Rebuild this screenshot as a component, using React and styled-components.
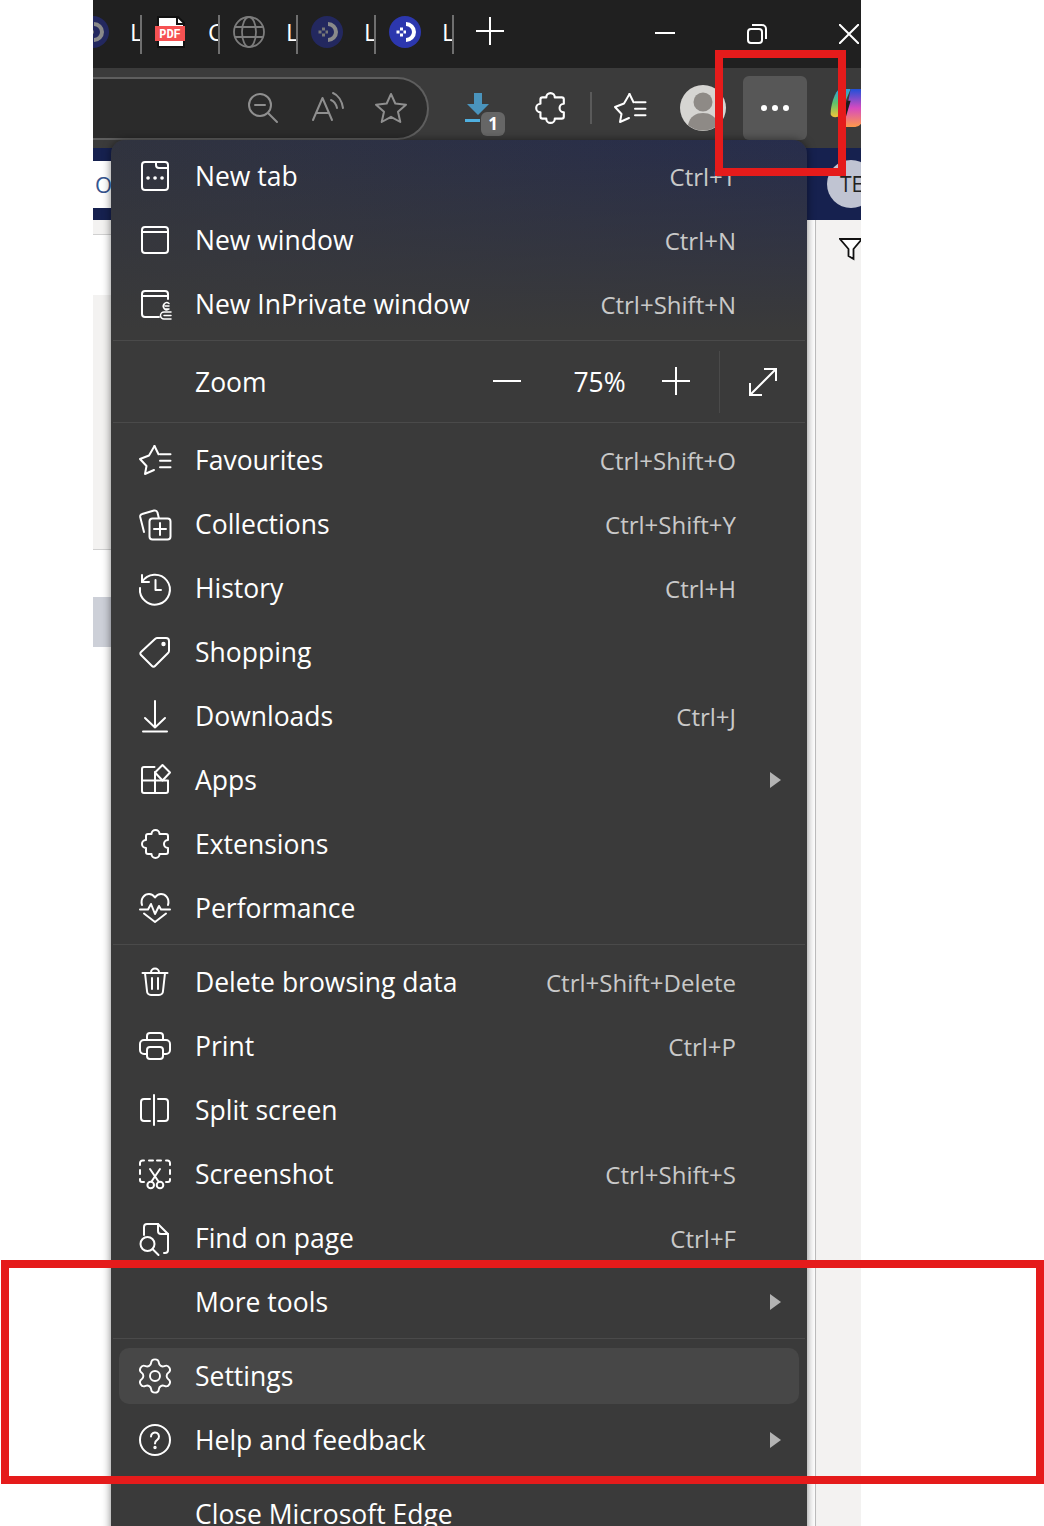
import React from "react";
import styled, { createGlobalStyle } from "styled-components";
import { Settings } from "lucide-react";

const GlobalStyle = createGlobalStyle`
  html, body {
    margin: 0;
    padding: 0;
    background: #fff;
  }
  body {
    font-family: "Open Sans", "Noto Sans", sans-serif;
  }
`;

const Stroke = ({ size = 32, color = "currentColor", width = 2, children }) => (
  <svg
    width={size}
    height={size}
    viewBox="0 0 32 32"
    fill="none"
    stroke={color}
    strokeWidth={width}
    strokeLinecap="round"
    strokeLinejoin="round"
    overflow="visible"
  >
    {children}
  </svg>
);

const puzzle =
  "M12.5 6a4 4 0 0 1 8 0H27a2 2 0 0 1 2 2v4a4 4 0 0 0 0 8v4a2 2 0 0 1-2 2h-6.5a4 4 0 0 1-8 0H9a2 2 0 0 1-2-2v-4a4 4 0 0 1 0-8V8a2 2 0 0 1 2-2z";

const starList = (
  <>
    <path d="M15.5 2L10 11.5 1 15l6.5 7L6 30l9-4" />
    <path d="M15.5 2l4 8.3M21 10.3h10.5M21 16.7h10.5M21 23.3h10.5" />
  </>
);

const icons = {
  newTab: (
    <Stroke>
      <path d="M6 2h20a3 3 0 0 1 3 3v22a3 3 0 0 1-3 3H6a3 3 0 0 1-3-3V5a3 3 0 0 1 3-3z" />
      <path d="M17 2v3a3 3 0 0 0 3 3h9" />
      <path d="M9 18h.1M16 18h.1M23 18h.1" strokeWidth="3.6" />
    </Stroke>
  ),
  newWindow: (
    <Stroke>
      <path d="M6 3h20a3 3 0 0 1 3 3v20a3 3 0 0 1-3 3H6a3 3 0 0 1-3-3V6a3 3 0 0 1 3-3z" />
      <path d="M3 8h26" />
    </Stroke>
  ),
  inPrivate: (
    <Stroke>
      <path d="M20 29H6a3 3 0 0 1-3-3V6a3 3 0 0 1 3-3h20a3 3 0 0 1 3 3v5" />
      <path d="M3 8h26" />
      <path d="M30 15.5a3.5 3.5 0 1 0 0 5.5h-4M26 18h4" strokeWidth="1.5" />
      <path d="M32 24h-7a3.2 3.2 0 0 0 0 7h7M25 27.5h7" strokeWidth="1.5" />
    </Stroke>
  ),
  favourites: <Stroke>{starList}</Stroke>,
  collections: (
    <Stroke>
      <path d="M5 24L1.2 9a2.5 2.5 0 0 1 2-3L15 2.5a3 3 0 0 1 3.5 2l1.3 5.5" />
      <rect x="10.5" y="10.5" width="21" height="21" rx="3" />
      <path d="M21 15v12M15 21h12" />
    </Stroke>
  ),
  history: (
    <Stroke>
      <path d="M3 10a15 15 0 1 1-2 6" />
      <path d="M3 3v7h7" />
      <path d="M16.5 8v10H22" />
    </Stroke>
  ),
  shopping: (
    <Stroke>
      <path d="M27 2h-9a3 3 0 0 0-2 1L2 16a2 2 0 0 0 0 3l11 11a2 2 0 0 0 3 0l13-13a3 3 0 0 0 1-2V5a3 3 0 0 0-3-3z" />
      <circle cx="24.5" cy="8" r="1.2" fill="currentColor" />
    </Stroke>
  ),
  downloads: (
    <Stroke>
      <path d="M16 1v26.5M6 18l10 9.5L26 18M4 31.5h24" />
    </Stroke>
  ),
  apps: (
    <Stroke>
      <path d="M15.5 3H5a2 2 0 0 0-2 2v22a2 2 0 0 0 2 2h22a2 2 0 0 0 2-2V16.5H3" />
      <path d="M16 8v21" />
      <path d="M23.5 1l7.5 7.5-7.5 8-7.5-8z" />
    </Stroke>
  ),
  extensions: (
    <Stroke>
      <path d={puzzle} />
    </Stroke>
  ),
  performance: (
    <Stroke>
      <path d="M1 17.5h8l3-5.5 4 10 4-8 2 3.5h9" />
      <path d="M3 13C1 6 6 2 10 2c3 0 5 2 6 3.5C17 4 19 2 22 2c4 0 9 4 7 11" />
      <path d="M5 21.5L16 30l11-8.5" />
    </Stroke>
  ),
  trash: (
    <Stroke>
      <path d="M3.5 7h25M12 6.5a4 4 0 0 1 8 0" />
      <path d="M6 7l2 18a4 4 0 0 0 4 4h8a4 4 0 0 0 4-4l2-18" />
      <path d="M13 12v11M19 12v11" />
    </Stroke>
  ),
  print: (
    <Stroke>
      <path d="M8 10V6a3 3 0 0 1 3-3h10a3 3 0 0 1 3 3v4" />
      <path d="M8 24H5a4 4 0 0 1-4-4v-6a4 4 0 0 1 4-4h22a4 4 0 0 1 4 4v6a4 4 0 0 1-4 4h-3" />
      <rect x="8" y="17" width="16" height="12" rx="3" />
    </Stroke>
  ),
  split: (
    <Stroke>
      <path d="M11 5H5a3 3 0 0 0-3 3v16a3 3 0 0 0 3 3h6" />
      <path d="M15 1v30" />
      <path d="M19 5h7a3 3 0 0 1 3 3v16a3 3 0 0 1-3 3h-7" />
    </Stroke>
  ),
  screenshot: (
    <Stroke>
      <path d="M1 7V5a2.5 2.5 0 0 1 2.5-2.5H5M10 2.5h4M18 2.5h4M27 2.5h1.5A2.5 2.5 0 0 1 31 5v2M1 12v4M31 12v4M1 21v1a2 2 0 0 0 2 2h2M31 21v1a2 2 0 0 1-2 2h-2" />
      <path d="M11 11l8.5 12.5M21 11l-8.5 12.5" />
      <circle cx="11.7" cy="27" r="3.3" />
      <circle cx="21" cy="27" r="3.3" />
    </Stroke>
  ),
  find: (
    <Stroke>
      <path d="M5 13V5a3 3 0 0 1 3-3h11l10 10v16a3 3 0 0 1-3 3h-1" />
      <path d="M19 2v7a3 3 0 0 0 3 3h7" />
      <circle cx="8.5" cy="22" r="7" />
      <path d="M13.5 27l6 6" />
    </Stroke>
  ),
  help: (
    <Stroke>
      <circle cx="16" cy="16" r="15" />
      <path d="M12 12.5a4 4 0 1 1 6.2 3.3c-1.5 1-2.2 2-2.2 3.7" />
      <circle cx="16" cy="23.5" r=".7" fill="currentColor" />
    </Stroke>
  ),
};

const groups = [
  {
    first: true,
    rows: [
      { icon: "newTab", label: "New tab", keys: "Ctrl+T" },
      { icon: "newWindow", label: "New window", keys: "Ctrl+N" },
      { icon: "inPrivate", label: "New InPrivate window", keys: "Ctrl+Shift+N" },
    ],
  },
  { zoom: true },
  {
    rows: [
      { icon: "favourites", label: "Favourites", keys: "Ctrl+Shift+O" },
      { icon: "collections", label: "Collections", keys: "Ctrl+Shift+Y" },
      { icon: "history", label: "History", keys: "Ctrl+H" },
      { icon: "shopping", label: "Shopping" },
      { icon: "downloads", label: "Downloads", keys: "Ctrl+J" },
      { icon: "apps", label: "Apps", more: true },
      { icon: "extensions", label: "Extensions" },
      { icon: "performance", label: "Performance" },
    ],
  },
  {
    rows: [
      { icon: "trash", label: "Delete browsing data", keys: "Ctrl+Shift+Delete" },
      { icon: "print", label: "Print", keys: "Ctrl+P" },
      { icon: "split", label: "Split screen" },
      { icon: "screenshot", label: "Screenshot", keys: "Ctrl+Shift+S" },
      { icon: "find", label: "Find on page", keys: "Ctrl+F" },
      { label: "More tools", more: true },
    ],
  },
  {
    rows: [
      { icon: "settings", label: "Settings", active: true },
      { icon: "help", label: "Help and feedback", more: true },
    ],
  },
  { rows: [{ label: "Close Microsoft Edge" }] },
];

const tabs = [
  { icon: "dim", text: "L" },
  { icon: "pdf", text: "C" },
  { icon: "globe", text: "L" },
  { icon: "dim", text: "L" },
  { icon: "bright", text: "L" },
];

const TabIcon = ({ kind }) => {
  if (kind === "pdf") {
    return (
      <svg width="32" height="32" viewBox="0 0 32 32">
        <path d="M3 1h20l6 6v24H3z" fill="#fff" stroke="#111" strokeWidth="2" />
        <path d="M22 1v7h7" fill="none" stroke="#111" strokeWidth="2" />
        <rect x="0" y="10" width="30" height="15" fill="#f65152" />
        <PdfLabel x="15" y="21.5" textAnchor="middle">
          PDF
        </PdfLabel>
      </svg>
    );
  }
  if (kind === "globe") {
    return (
      <svg width="32" height="32" viewBox="0 0 32 32" fill="none" stroke="#7c7c7c" strokeWidth="1.8">
        <circle cx="16" cy="16" r="15" />
        <ellipse cx="16" cy="16" rx="7" ry="15" />
        <path d="M2 11h28M2 21h28" />
      </svg>
    );
  }
  const bright = kind === "bright";
  return (
    <svg width="32" height="32" viewBox="0 0 32 32">
      <circle cx="16" cy="16" r="16" fill={bright ? "#2c37ae" : "#23285f"} />
      <path
        d="M17 6a10 10 0 0 1 0 20v-4a6 6 0 0 0 0-12z"
        fill={bright ? "#fff" : "#8a8a8a"}
      />
      <path
        d="M11 11.5h3v3h-3zM7.5 14.5h3v3h-3zM11 17.5h3v3h-3zM14.5 14.5H17v3h-2.5z"
        fill={bright ? "#fff" : "#777"}
      />
    </svg>
  );
};

const App = () => {
  return (
    <Page>
      <GlobalStyle />
      <Browser>
        <TabStrip>
          {tabs.map((tab, i) => (
            <Tab key={i}>
              <TabIcon kind={tab.icon} />
              <TabTitle>{tab.text}</TabTitle>
            </Tab>
          ))}
          <AddTab>
            <svg width="28" height="28" viewBox="0 0 28 28" stroke="#fff" strokeWidth="2">
              <path d="M0 14h28M14 0v28" />
            </svg>
          </AddTab>
          <WindowControls>
            <WindowButton>
              <svg width="20" height="20" viewBox="0 0 20 20" stroke="#fff" strokeWidth="2">
                <path d="M0 9h20" />
              </svg>
            </WindowButton>
            <WindowButton>
              <svg width="20" height="20" viewBox="0 0 20 20" fill="none" stroke="#fff" strokeWidth="2">
                <rect x="1" y="5" width="14" height="14" rx="3" />
                <path d="M5 1h10a4 4 0 0 1 4 4v10" />
              </svg>
            </WindowButton>
            <WindowButton>
              <svg width="20" height="20" viewBox="0 0 20 20" stroke="#fff" strokeWidth="2">
                <path d="M0 0l20 20M20 0L0 20" />
              </svg>
            </WindowButton>
          </WindowControls>
        </TabStrip>

        <Toolbar>
          <AddressBar>
            <Stroke color="#8f8f8f">
              <circle cx="13" cy="13" r="11" />
              <path d="M8 13h10M21 21l9 9" />
            </Stroke>
            <Stroke color="#8f8f8f">
              <path d="M2 28L11.5 6 21 28M5.5 21h12" />
              <path d="M20 8c3 1 5 4 6 8M22 1c5 2 9 8 10 15" />
            </Stroke>
            <Stroke color="#8f8f8f">
              <path d="M16 2l4.3 9.5 10.7 1.2-8 7 2.3 10.3L16 24.8 6.700 30 9 19.700l-8-7 10.700-1.200z" />
            </Stroke>
          </AddressBar>

          <DownloadButton>
            <svg width="26" height="32" viewBox="0 0 26 32">
              <path d="M9 0h8v11h7L13 22 2 11h7z" fill="#4a94bd" />
              <rect x="0" y="26" width="15" height="3" fill="#4fb0e0" />
            </svg>
            <DownloadBadge>1</DownloadBadge>
          </DownloadButton>

          <ToolIcon $gap={28}>
            <Stroke size="34" color="#fff">
              <path d={puzzle} />
            </Stroke>
          </ToolIcon>
          <ToolDivider />
          <ToolIcon $gap={29}>
            <Stroke color="#fff">{starList}</Stroke>
          </ToolIcon>

          <Avatar>
            <svg width="46" height="46" viewBox="0 0 46 46">
              <circle cx="23" cy="23" r="23" fill="#d6d5d2" />
              <circle cx="23" cy="17" r="9.5" fill="#8e8a86" />
              <path d="M8 40c2-9 8-12 15-12s13 3 15 12a23 23 0 0 1-30 0z" fill="#8e8a86" />
            </svg>
          </Avatar>

          <MoreButton>
            <MoreDot />
            <MoreDot />
            <MoreDot />
          </MoreButton>

          <Copilot>
            <svg width="36" height="40" viewBox="0 0 36 44">
              <defs>
                <linearGradient id="copilotLeft" x1="0" y1="0" x2="0" y2="1">
                  <stop offset="0" stopColor="#2f9fe0" />
                  <stop offset=".5" stopColor="#5fc26a" />
                  <stop offset="1" stopColor="#f2c63a" />
                </linearGradient>
                <linearGradient id="copilotRight" x1="0" y1="0" x2="0" y2="1">
                  <stop offset="0" stopColor="#1f50d8" />
                  <stop offset=".5" stopColor="#d64ac0" />
                  <stop offset="1" stopColor="#ff9a4a" />
                </linearGradient>
              </defs>
              <path d="M10 1h12L10 30c-2 3-9 3-10-1C0 18 5 3 10 1z" fill="url(#copilotLeft)" />
              <path d="M22 1h14v30c0 6-3 11-9 12H14z" fill="url(#copilotRight)" />
              <path d="M18 14L12 30l-1 4 6-3 5-17z" fill="#1c1c1c" />
            </svg>
          </Copilot>
        </Toolbar>

        <PageBanner>
          <BannerStrip>O</BannerStrip>
          <UserBadge>TE</UserBadge>
        </PageBanner>

        <PageBody>
          <ContentList>
            <ListRow $height={14} $bg="#f3f2f1" $border />
            <ListRow $height={60} />
            <ListRow $height={254} $bg="#f3f2f1" $border />
            <ListRow $height={47} />
            <ListRow $height={50} $bg="#cdd0d8" />
          </ContentList>
          <FilterRail>
            <svg width="24" height="24" viewBox="0 0 24 24" fill="#fff" stroke="#111" strokeWidth="1.8">
              <path d="M1 2h22l-8.500 10v10l-5-3v-7z" />
            </svg>
          </FilterRail>
        </PageBody>
      </Browser>

      <Menu>
        {groups.map((group, i) => (
          <MenuGroup key={i} $first={group.first} $flush={group.zoom}>
            {group.zoom ? (
              <ZoomRow>
                <MenuLabel>Zoom</MenuLabel>
                <ZoomControls>
                  <svg width="28" height="28" viewBox="0 0 28 28" stroke="#fff" strokeWidth="2">
                    <path d="M0 13h28" />
                  </svg>
                  <ZoomValue>75%</ZoomValue>
                  <svg width="28" height="28" viewBox="0 0 28 28" stroke="#fff" strokeWidth="2" overflow="visible">
                    <path d="M0 13h28M14 -1v28" />
                  </svg>
                  <ZoomSeparator />
                  <svg width="30" height="30" viewBox="0 0 30 30" fill="none" stroke="#fff" strokeWidth="2">
                    <path d="M2 28L28 2M16 2h12v12M2 16v12h12" />
                  </svg>
                </ZoomControls>
              </ZoomRow>
            ) : (
              group.rows.map((row) => (
                <MenuRow key={row.label} $active={row.active}>
                  <RowIcon>
                    {row.icon === "settings" ? (
                      <Settings size={40} strokeWidth={1.15} />
                    ) : (
                      icons[row.icon]
                    )}
                  </RowIcon>
                  <MenuLabel>{row.label}</MenuLabel>
                  {row.keys && <Shortcut>{row.keys}</Shortcut>}
                  {row.more && <SubArrow />}
                </MenuRow>
              ))
            )}
          </MenuGroup>
        ))}
      </Menu>

      <Callout $x={715} $y={50} $w={131} $h={126} />
      <Callout $x={1} $y={1260} $w={1043} $h={224} />
    </Page>
  );
};

export default App;

const Page = styled.div`
  position: relative;
  width: 1044px;
  height: 1526px;
  overflow: hidden;
  background: #fff;
`;

const Browser = styled.div`
  width: 768px;
  height: 1526px;
  margin-left: 93px;
  overflow: hidden;
  display: flex;
  flex-direction: column;
`;

const TabStrip = styled.div`
  height: 68px;
  flex: none;
  display: flex;
  background: #202020;
  padding-top: 15px;
  box-sizing: border-box;
  margin-left: -29px;
`;

const Tab = styled.div`
  width: 78px;
  height: 39px;
  flex: none;
  box-sizing: border-box;
  padding: 1px 0 0 13px;
  border-right: 2px solid #6f6f6f;
  display: flex;
  align-items: flex-start;
  overflow: hidden;
  svg {
    flex: none;
  }
`;

const TabTitle = styled.span`
  margin-left: 21px;
  color: #fff;
  font-size: 24px;
  line-height: 32px;
`;

const PdfLabel = styled.text`
  fill: #fff;
  font-family: "Liberation Mono", monospace;
  font-size: 12px;
  font-weight: 700;
`;

const AddTab = styled.div`
  margin: 2px 0 0 22px;
  height: 32px;
  flex: none;
`;

const WindowControls = styled.div`
  margin-left: auto;
  margin-right: -34px;
  display: flex;
  flex: none;
`;

const WindowButton = styled.div`
  width: 92px;
  height: 38px;
  display: flex;
  align-items: center;
  justify-content: center;
`;

const Toolbar = styled.div`
  height: 80px;
  flex: none;
  display: flex;
  align-items: center;
  position: relative;
  background: #3b3b3b;
`;

const AddressBar = styled.div`
  width: 337px;
  height: 63px;
  flex: none;
  box-sizing: border-box;
  margin-left: -1px;
  padding-right: 20px;
  display: flex;
  align-items: center;
  justify-content: flex-end;
  gap: 32px;
  background: #2b2b2b;
  border: 2px solid #5e5e5e;
  border-left: none;
  border-radius: 0 32px 32px 0;
`;

const DownloadButton = styled.div`
  position: relative;
  margin-left: 36px;
  width: 40px;
  height: 44px;
  flex: none;
  padding-top: 7px;
  box-sizing: border-box;
`;

const DownloadBadge = styled.span`
  position: absolute;
  right: 0;
  bottom: -6px;
  width: 24px;
  height: 24px;
  border-radius: 6px;
  background: #666;
  color: #fff;
  font-size: 17px;
  font-weight: 700;
  line-height: 24px;
  text-align: center;
`;

const ToolIcon = styled.div`
  display: flex;
  flex: none;
  margin-left: ${(p) => p.$gap}px;
`;

const ToolDivider = styled.div`
  width: 2px;
  height: 32px;
  flex: none;
  margin-left: 23px;
  margin-right: -7px;
  background: #5a5a5a;
`;

const Avatar = styled.div`
  display: flex;
  flex: none;
  margin-left: 34px;
`;

const MoreButton = styled.div`
  margin-left: 17px;
  width: 64px;
  height: 64px;
  flex: none;
  border-radius: 6px;
  background: #575757;
  display: flex;
  align-items: center;
  justify-content: center;
  gap: 5px;
`;

const MoreDot = styled.span`
  width: 6px;
  height: 6px;
  border-radius: 50%;
  background: #fff;
`;

const Copilot = styled.div`
  margin-left: 22px;
  display: flex;
  flex: none;
`;

const PageBanner = styled.div`
  height: 72px;
  flex: none;
  background: #16214f;
  display: flex;
  align-items: center;
  justify-content: space-between;
`;

const BannerStrip = styled.div`
  width: 60px;
  height: 47px;
  padding-left: 2px;
  box-sizing: border-box;
  background: #fff;
  color: #35558f;
  font-size: 22px;
  line-height: 47px;
`;

const UserBadge = styled.div`
  width: 48px;
  height: 48px;
  margin-right: -14px;
  border-radius: 50%;
  background: #c0c4d2;
  color: #222;
  font-size: 21px;
  line-height: 48px;
  padding-left: 13px;
  box-sizing: border-box;
`;

const PageBody = styled.div`
  flex: 1;
  display: flex;
`;

const ContentList = styled.div`
  flex: 1;
  padding-right: 8px;
  background: #fff;
  display: flex;
  flex-direction: column;
`;

const ListRow = styled.div`
  height: ${(p) => p.$height}px;
  flex: none;
  background: ${(p) => p.$bg || "#fff"};
  border-bottom: ${(p) => (p.$border ? "1px solid #d0d0d0" : "none")};
`;

const FilterRail = styled.div`
  width: 46px;
  flex: none;
  box-sizing: border-box;
  padding: 17px 0 0 23px;
  background: #f3f2f1;
  border-left: 1px solid #bdbdbd;
`;

const Menu = styled.div`
  position: absolute;
  left: 111px;
  top: 140px;
  width: 696px;
  height: 1420px;
  box-sizing: border-box;
  padding-top: 4px;
  border-radius: 14px 14px 0 0;
  background: linear-gradient(to bottom, rgba(58, 58, 58, 0) 0, #3a3a3a 190px),
    linear-gradient(to right, #30333f, #272d4c);
  box-shadow: 0 0 8px rgba(0, 0, 0, 0.5);
`;

const MenuGroup = styled.div`
  padding: ${(p) => (p.$first ? "0 0 4px" : p.$flush ? "0" : "5px 0 4px")};
  border-top: ${(p) => (p.$first ? "none" : "1px solid #4a4a4a")};
  margin: 0 2px;
`;

const MenuRow = styled.div`
  position: relative;
  height: 64px;
  display: flex;
  align-items: center;
  padding: 0 69px 0 26px;
  color: #fff;
  &::before {
    content: "";
    position: absolute;
    inset: 4px 6px;
    border-radius: 10px;
    background: ${(p) => (p.$active ? "#474747" : "transparent")};
  }
  > * {
    position: relative;
  }
`;

const RowIcon = styled.div`
  width: 32px;
  height: 32px;
  flex: none;
  margin-right: 24px;
  display: flex;
  align-items: center;
  justify-content: center;
  svg {
    flex: none;
  }
`;

const MenuLabel = styled.span`
  color: #fff;
  font-size: 26.5px;
  line-height: 36px;
  white-space: nowrap;
`;

const Shortcut = styled.span`
  margin-left: auto;
  padding-top: 1px;
  color: #c9c9c9;
  font-size: 24px;
  white-space: nowrap;
`;

const SubArrow = styled.span`
  position: absolute !important;
  right: 24px;
  top: 24px;
  width: 0;
  height: 0;
  border-left: 11px solid #b3b3b3;
  border-top: 8px solid transparent;
  border-bottom: 8px solid transparent;
`;

const ZoomRow = styled.div`
  height: 81px;
  display: flex;
  align-items: center;
  padding-left: 82px;
`;

const ZoomControls = styled.div`
  margin-left: auto;
  margin-right: 27px;
  display: flex;
  align-items: center;
`;

const ZoomValue = styled.span`
  width: 141px;
  box-sizing: border-box;
  padding-left: 16px;
  text-align: center;
  color: #fff;
  font-size: 26.5px;
`;

const ZoomSeparator = styled.span`
  width: 1px;
  height: 62px;
  margin: 0 28px 0 29px;
  background: #4a4a4a;
`;

const Callout = styled.div`
  position: absolute;
  left: ${(p) => p.$x}px;
  top: ${(p) => p.$y}px;
  width: ${(p) => p.$w}px;
  height: ${(p) => p.$h}px;
  box-sizing: border-box;
  border: 8px solid #e51b1b;
  pointer-events: none;
`;
